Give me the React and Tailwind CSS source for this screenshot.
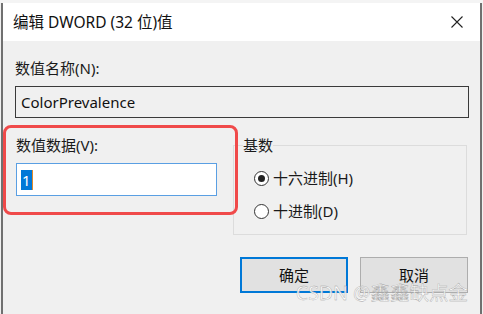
import React from 'react';

const font = "font-['Noto_Sans','Noto_Sans_CJK_SC',sans-serif]";

function Radio({ checked, label }) {
  return (
    <label className="flex items-center h-[20px] text-[15px] text-[#1a1a1a]">
      <span className="w-[15px] h-[15px] rounded-full border border-[#333] bg-white flex items-center justify-center">
        {checked && <span className="w-[7px] h-[7px] rounded-full bg-[#222]" />}
      </span>
      <span className="ml-[4px] leading-[20px]">{label}</span>
    </label>
  );
}

export default function App() {
  return (
    <div className={`w-[483px] h-[314px] bg-[#f0f0f0] overflow-hidden ${font}`}>
      <div className="h-[3px] bg-[#f4f4f4]" />
      <div className="mx-[1px] h-[311px] border-x-2 border-[#707070] flex flex-col">
        {/* Title bar */}
        <div className="h-[38px] bg-white flex items-center justify-between pl-[10px] pr-[17px] shrink-0">
          <span className="text-[15.5px] text-[#111] leading-[20px]">编辑 DWORD (32 位)值</span>
          <svg width="12" height="12" viewBox="0 0 12 12" className="stroke-[#222]">
            <path d="M0.5 0.5 L11.5 11.5 M11.5 0.5 L0.5 11.5" strokeWidth="1.1" fill="none" />
          </svg>
        </div>

        {/* Body */}
        <div className="relative flex-1 bg-[#f0f0f0] pl-[12px] pr-[11px] pt-[17px] flex flex-col">
          <div className="text-[15px] leading-[20px] text-[#1a1a1a]">数值名称(N):</div>
          <div className="mt-[8px] h-[32px] border border-[#3a3a3a] bg-[#f0f0f0] flex items-center pl-[5px] text-[15px] text-[#111]">
            ColorPrevalence
          </div>

          <div className="mt-[17px] flex">
            <div className="w-[218px] shrink-0">
              <div className="text-[15px] leading-[20px] text-[#1a1a1a] pl-[1px]">数值数据(V):</div>
              <div className="mt-[8px] ml-[1px] w-[201px] h-[33px] border border-[#5a9fe3] bg-white flex items-center pl-[4px]">
                <span className="bg-[#0078d7] text-white text-[15px] leading-[20px] px-[1px]">1</span>
                <span className="w-[1px] h-[20px] bg-[#e08a2a]" />
              </div>
            </div>
            <fieldset className="w-[234px] h-[100px] border border-[#dcdcdc] pl-[20px]">
              <legend className="-ml-[11px] text-[15px] leading-[20px] text-[#1a1a1a]">基数</legend>
              <div className="mt-[13px] flex flex-col gap-[13px]">
                <Radio checked label="十六进制(H)" />
                <Radio label="十进制(D)" />
              </div>
            </fieldset>
          </div>

          <div className="mt-[22px] flex justify-end gap-[12px] pr-[1px]">
            <button className="w-[108px] h-[36px] border-2 border-[#0078d7] bg-[#e1e1e1] text-[15px] text-[#111]">确定</button>
            <button className="w-[108px] h-[36px] border border-[#adadad] bg-[#e1e1e1] text-[15px] text-[#111]">取消</button>
          </div>

          {/* red annotation */}
          <div className="absolute left-0 top-[84px] w-[235px] h-[90px] border-[3px] border-[#f04a4a] rounded-[8px] pointer-events-none" />

          {/* watermark */}
          <div className="absolute right-[12px] bottom-[12px] text-[19.5px] leading-none text-white/85 [-webkit-text-stroke:0.35px_#9a9a9a] pointer-events-none">
            CSDN @鑫鑫缺点金
          </div>
        </div>
      </div>
    </div>
  );
}
